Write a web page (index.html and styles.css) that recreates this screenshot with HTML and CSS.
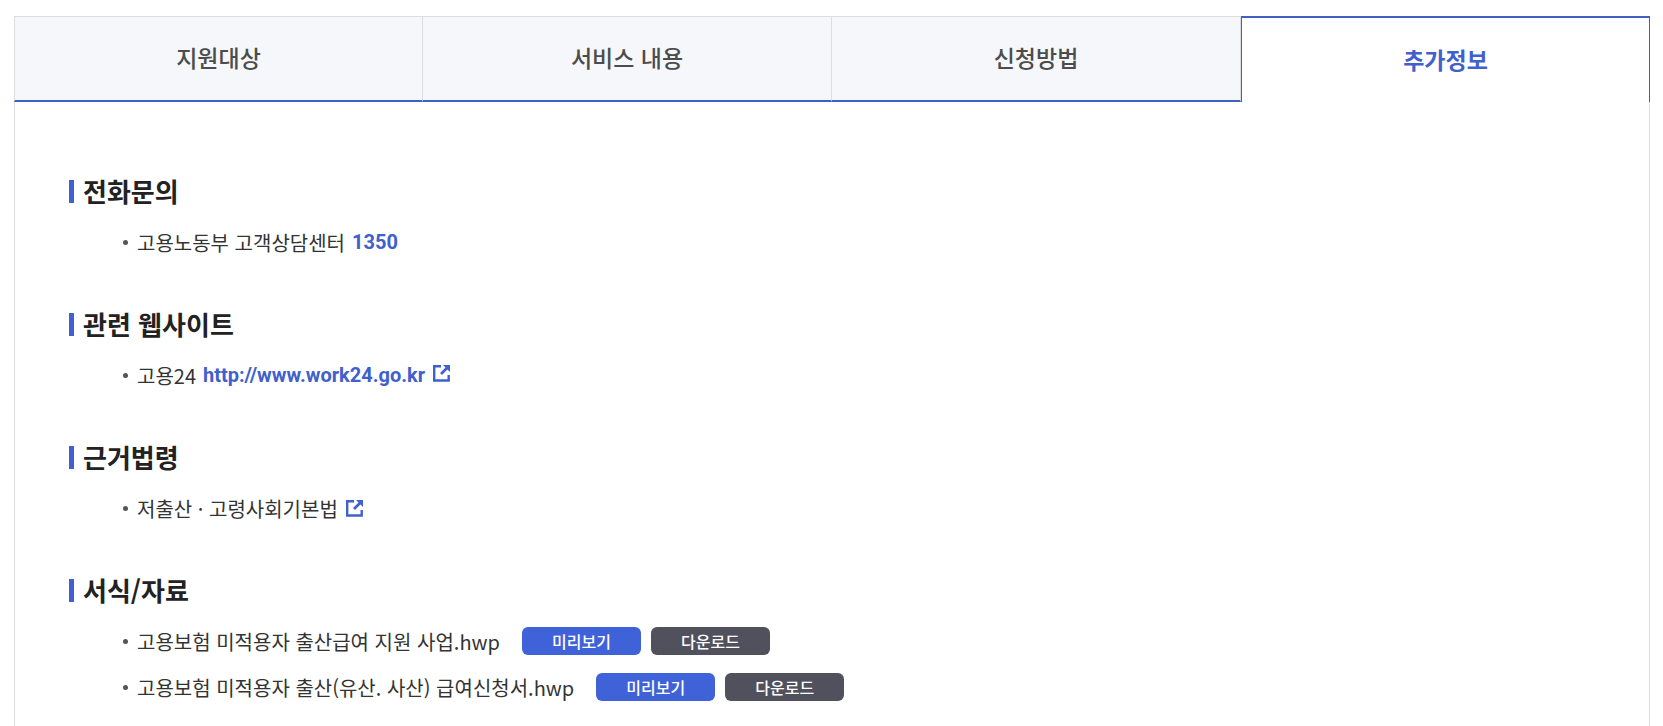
FILE: index.html
```html
<!DOCTYPE html>
<html lang="ko">
<head>
<meta charset="utf-8">
<meta name="viewport" content="width=device-width, initial-scale=1">
<title>추가정보</title>
<link rel="stylesheet" href="styles.css">
</head>
<body>
<nav class="tabs" role="tablist">
  <button class="tab" type="button" role="tab" aria-selected="false">지원대상</button>
  <button class="tab" type="button" role="tab" aria-selected="false">서비스 내용</button>
  <button class="tab" type="button" role="tab" aria-selected="false">신청방법</button>
  <button class="tab active" type="button" role="tab" aria-selected="true">추가정보</button>
</nav>
<main class="panel">
  <section class="group">
    <h2 class="title">전화문의</h2>
    <ul class="list">
      <li class="item"><span>고용노동부 고객상담센터</span><a class="link" href="tel:1350">1350</a></li>
    </ul>
  </section>
  <section class="group">
    <h2 class="title">관련 웹사이트</h2>
    <ul class="list">
      <li class="item"><span>고용24</span><a class="link" href="http://www.work24.go.kr">http://www.work24.go.kr<svg class="icon" viewBox="0 0 17 17" aria-hidden="true"><path class="frame" d="M8 1.2H1.2V15.5H15.7V10"/><path class="arrow" d="M8 9L14 3"/><path class="head" d="M10 0H17V7Z"/></svg></a></li>
    </ul>
  </section>
  <section class="group">
    <h2 class="title">근거법령</h2>
    <ul class="list">
      <li class="item"><a class="law" href="#law">저출산 · 고령사회기본법<svg class="icon" viewBox="0 0 17 17" aria-hidden="true"><path class="frame" d="M8 1.2H1.2V15.5H15.7V10"/><path class="arrow" d="M8 9L14 3"/><path class="head" d="M10 0H17V7Z"/></svg></a></li>
    </ul>
  </section>
  <section class="group">
    <h2 class="title">서식/자료</h2>
    <ul class="list">
      <li class="item"><span>고용보험 미적용자 출산급여 지원 사업.hwp</span><div class="actions"><button class="btn preview" type="button">미리보기</button><button class="btn download" type="button">다운로드</button></div></li>
      <li class="item"><span>고용보험 미적용자 출산(유산. 사산) 급여신청서.hwp</span><div class="actions"><button class="btn preview" type="button">미리보기</button><button class="btn download" type="button">다운로드</button></div></li>
    </ul>
  </section>
</main>
</body>
</html>
```
FILE: styles.css
```css
* { box-sizing: border-box; }

body {
  display: flex;
  flex-direction: column;
  min-height: 100vh;
  margin: 0;
  padding: 16px 13px 0 14px;
  background: #fff;
  color: #333;
  font-family: "Noto Sans CJK KR", sans-serif;
  font-size: 20px;
}

button { font-family: inherit; cursor: pointer; }

.tabs {
  display: grid;
  grid-template-columns: repeat(4, 1fr);
}

.tab {
  height: 86px;
  padding: 0 0 3px;
  border: 1px solid #dcdde0;
  border-left-width: 0;
  border-bottom: 2px solid #4060c4;
  background: #f5f7fb;
  color: #4c4c4c;
  font-size: 23px;
  font-weight: 500;
}

.tab:first-child { border-left-width: 1px; }

.tab.active {
  border: 1px solid #4060c4;
  border-top-width: 2px;
  border-bottom-width: 0;
  background: #fff;
  color: #4060cc;
  font-weight: 700;
}

.panel {
  flex: 1;
  padding: 71px 54px 0;
  border: solid #dcdde0;
  border-width: 0 1px;
}

.group { margin-bottom: 41px; }
.group:last-child { margin-bottom: 0; }

.title {
  display: flex;
  align-items: center;
  gap: 9px;
  margin: 0 0 10px;
  color: #222;
  font-size: 26px;
  font-weight: 700;
  line-height: 36px;
}

.title::before {
  content: "";
  width: 5px;
  height: 23px;
  background: #4060d0;
}

.list {
  margin: 0;
  padding: 0 0 0 54px;
  list-style: none;
}

.item {
  display: flex;
  align-items: center;
  min-height: 46px;
}

.item::before {
  content: "";
  width: 5px;
  height: 5px;
  margin-right: 9px;
  border-radius: 50%;
  background: #555;
}

.link {
  margin-left: 7px;
  color: #4060cc;
  font-family: Roboto, "Noto Sans CJK KR", sans-serif;
  font-weight: 700;
  text-decoration: none;
}

.law { color: inherit; text-decoration: none; }

.icon {
  width: 17px;
  height: 17px;
  margin-left: 8px;
}

.frame { fill: none; stroke: #4060cc; stroke-width: 2.4; }
.arrow { fill: none; stroke: #4060cc; stroke-width: 2.6; }
.head { fill: #4060cc; }

.actions {
  display: flex;
  gap: 10px;
  margin-left: 22px;
}

.btn {
  width: 119px;
  height: 28px;
  padding: 0;
  border: 0;
  border-radius: 6px;
  color: #fff;
  font-size: 16px;
  font-weight: 500;
  line-height: 28px;
}

.preview { background: #4062d8; }
.download { background: #51515e; }
```
